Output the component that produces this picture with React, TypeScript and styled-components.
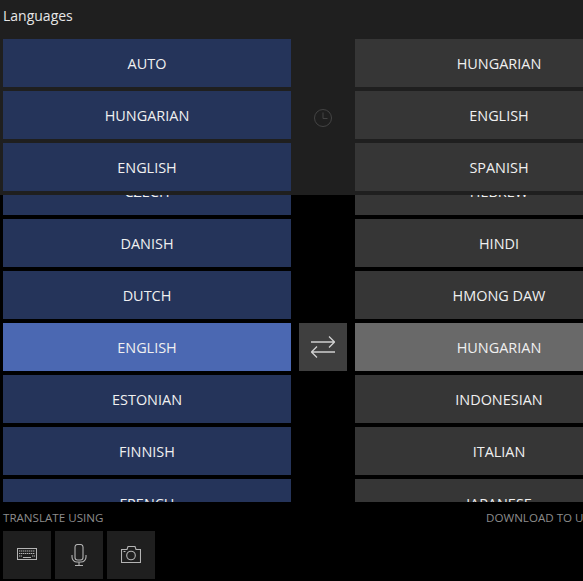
import styled, { createGlobalStyle } from 'styled-components';

const GlobalStyle = createGlobalStyle`
	html, body {
		margin: 0;
		padding: 0;
		background: #000;
		overflow: hidden;
	}
	body {
		font-family: 'Open Sans', 'Noto Sans', sans-serif;
	}
`;

const Page = styled.div`
	position: relative;
	width: 583px;
	height: 581px;
	overflow: hidden;
	background: #000;
`;

const Pinned = styled.div`
	position: absolute;
	top: 0;
	left: 0;
	width: 100%;
	height: 195px;
	background: #1f1f1f;
	z-index: 1;
`;

const Title = styled.div`
	height: 39px;
	padding: 6px 0 0 3px;
	box-sizing: border-box;
	font-size: 14px;
	line-height: 20px;
	color: #e6e6e6;
`;

const LanguageGrid = styled.div`
	display: grid;
	grid-template-columns: 288px 48px 288px;
	grid-auto-rows: 48px;
	column-gap: 8px;
	row-gap: 4px;
	padding-left: 3px;
`;

const ListArea = styled.div`
	height: 502px;
	padding-top: 167px;
	box-sizing: border-box;
	overflow: hidden;
`;

const LanguageButton = styled.div<{ $side: 'from' | 'to'; $row: number; $selected?: boolean }>`
	grid-column: ${p => (p.$side === 'from' ? 1 : 3)};
	grid-row: ${p => p.$row};
	display: flex;
	align-items: center;
	justify-content: center;
	font-size: 14.45px;
	color: #f0f0f0;
	background: ${p =>
		p.$side === 'from'
			? p.$selected
				? '#4b68b2'
				: '#25345a'
			: p.$selected
				? '#696969'
				: '#363636'};
`;

const SwapButton = styled.div`
	grid-column: 2;
	grid-row: 4;
	display: flex;
	align-items: center;
	justify-content: center;
	background: #3f3f3f;
	color: #d0d0d0;
`;

const RecentSlot = styled.div`
	grid-column: 2;
	grid-row: 2;
	display: flex;
	align-items: center;
	justify-content: center;
	padding-top: 6px;
	color: #444;
`;

const Footer = styled.div`
	display: flex;
	justify-content: space-between;
	height: 79px;
	padding-left: 3px;
`;

const FooterColumn = styled.div`
	display: flex;
	flex-direction: column;
`;

const DownloadColumn = styled(FooterColumn)`
	width: 97px;
	overflow: hidden;
`;

const Caption = styled.div`
	height: 29px;
	padding-top: 8px;
	box-sizing: border-box;
	font-size: 11.6px;
	line-height: 16px;
	color: #8c8c8c;
	white-space: nowrap;
`;

const InputRow = styled.div`
	display: flex;
	gap: 4px;
`;

const InputButton = styled.div`
	width: 48px;
	height: 48px;
	display: flex;
	align-items: center;
	justify-content: center;
	background: #1f1f1f;
	color: #b4b4b4;
`;

const ClockIcon = () => (
	<svg width="18" height="18" viewBox="0 0 18 18" fill="none" stroke="currentColor" strokeWidth="1">
		<circle cx="9" cy="9" r="8.5" />
		<path d="M9 3.5v6h4.5" />
	</svg>
);

const SwapIcon = () => (
	<svg width="24" height="22" viewBox="0 0 24 22" fill="none" stroke="currentColor" strokeWidth="1.3">
		<path d="M0 6h23.5M18 .5L23.5 6 18 11.5" />
		<path d="M24 16H.5M6 10.5L.5 16 6 21.5" />
	</svg>
);

const KeyboardIcon = () => (
	<svg width="20" height="20" viewBox="0 0 20 20" fill="none" stroke="currentColor">
		<rect x="0.5" y="3.5" width="19" height="11" />
		<path d="M2 6h16M2 8.5h16M2 11h3M15 11h3" strokeDasharray="1.4 0.6" />
		<path d="M6 12.5h8" />
	</svg>
);

const MicIcon = () => (
	<svg width="16" height="22" viewBox="0 0 16 22" fill="none" stroke="currentColor" strokeWidth="1.1">
		<rect x="4" y="0.5" width="8" height="15.5" rx="2.5" />
		<path d="M1 11v2a5 5 0 0 0 5 5h4a5 5 0 0 0 5-5v-2M8 18v3.5M4 21.5h8" />
	</svg>
);

const CameraIcon = () => (
	<svg width="20" height="20" viewBox="0 0 20 20" fill="none" stroke="currentColor" strokeWidth="1.1">
		<path d="M0.5 4.5h5.5l1-3h7l1 3h4.5v13h-19z" />
		<circle cx="10" cy="10.5" r="4.3" />
		<path d="M2.5 6.5h2" />
	</svg>
);

const PINNED_FROM = ['AUTO', 'HUNGARIAN', 'ENGLISH'];
const PINNED_TO = ['HUNGARIAN', 'ENGLISH', 'SPANISH'];
const FROM = ['CZECH', 'DANISH', 'DUTCH', 'ENGLISH', 'ESTONIAN', 'FINNISH', 'FRENCH'];
const TO = ['HEBREW', 'HINDI', 'HMONG DAW', 'HUNGARIAN', 'INDONESIAN', 'ITALIAN', 'JAPANESE'];

const App = () => (
	<Page>
		<GlobalStyle />
		<Pinned>
			<Title>Languages</Title>
			<LanguageGrid>
				{PINNED_FROM.map((name, i) => (
					<LanguageButton key={name} $side="from" $row={i + 1}>
						{name}
					</LanguageButton>
				))}
				<RecentSlot>
					<ClockIcon />
				</RecentSlot>
				{PINNED_TO.map((name, i) => (
					<LanguageButton key={name} $side="to" $row={i + 1}>
						{name}
					</LanguageButton>
				))}
			</LanguageGrid>
		</Pinned>
		<ListArea>
			<LanguageGrid>
				{FROM.map((name, i) => (
					<LanguageButton key={name} $side="from" $row={i + 1} $selected={name === 'ENGLISH'}>
						{name}
					</LanguageButton>
				))}
				<SwapButton>
					<SwapIcon />
				</SwapButton>
				{TO.map((name, i) => (
					<LanguageButton key={name} $side="to" $row={i + 1} $selected={name === 'HUNGARIAN'}>
						{name}
					</LanguageButton>
				))}
			</LanguageGrid>
		</ListArea>
		<Footer>
			<FooterColumn>
				<Caption>TRANSLATE USING</Caption>
				<InputRow>
					<InputButton>
						<KeyboardIcon />
					</InputButton>
					<InputButton>
						<MicIcon />
					</InputButton>
					<InputButton>
						<CameraIcon />
					</InputButton>
				</InputRow>
			</FooterColumn>
			<DownloadColumn>
				<Caption>DOWNLOAD TO USE OFFLINE</Caption>
			</DownloadColumn>
		</Footer>
	</Page>
);

export default App;
